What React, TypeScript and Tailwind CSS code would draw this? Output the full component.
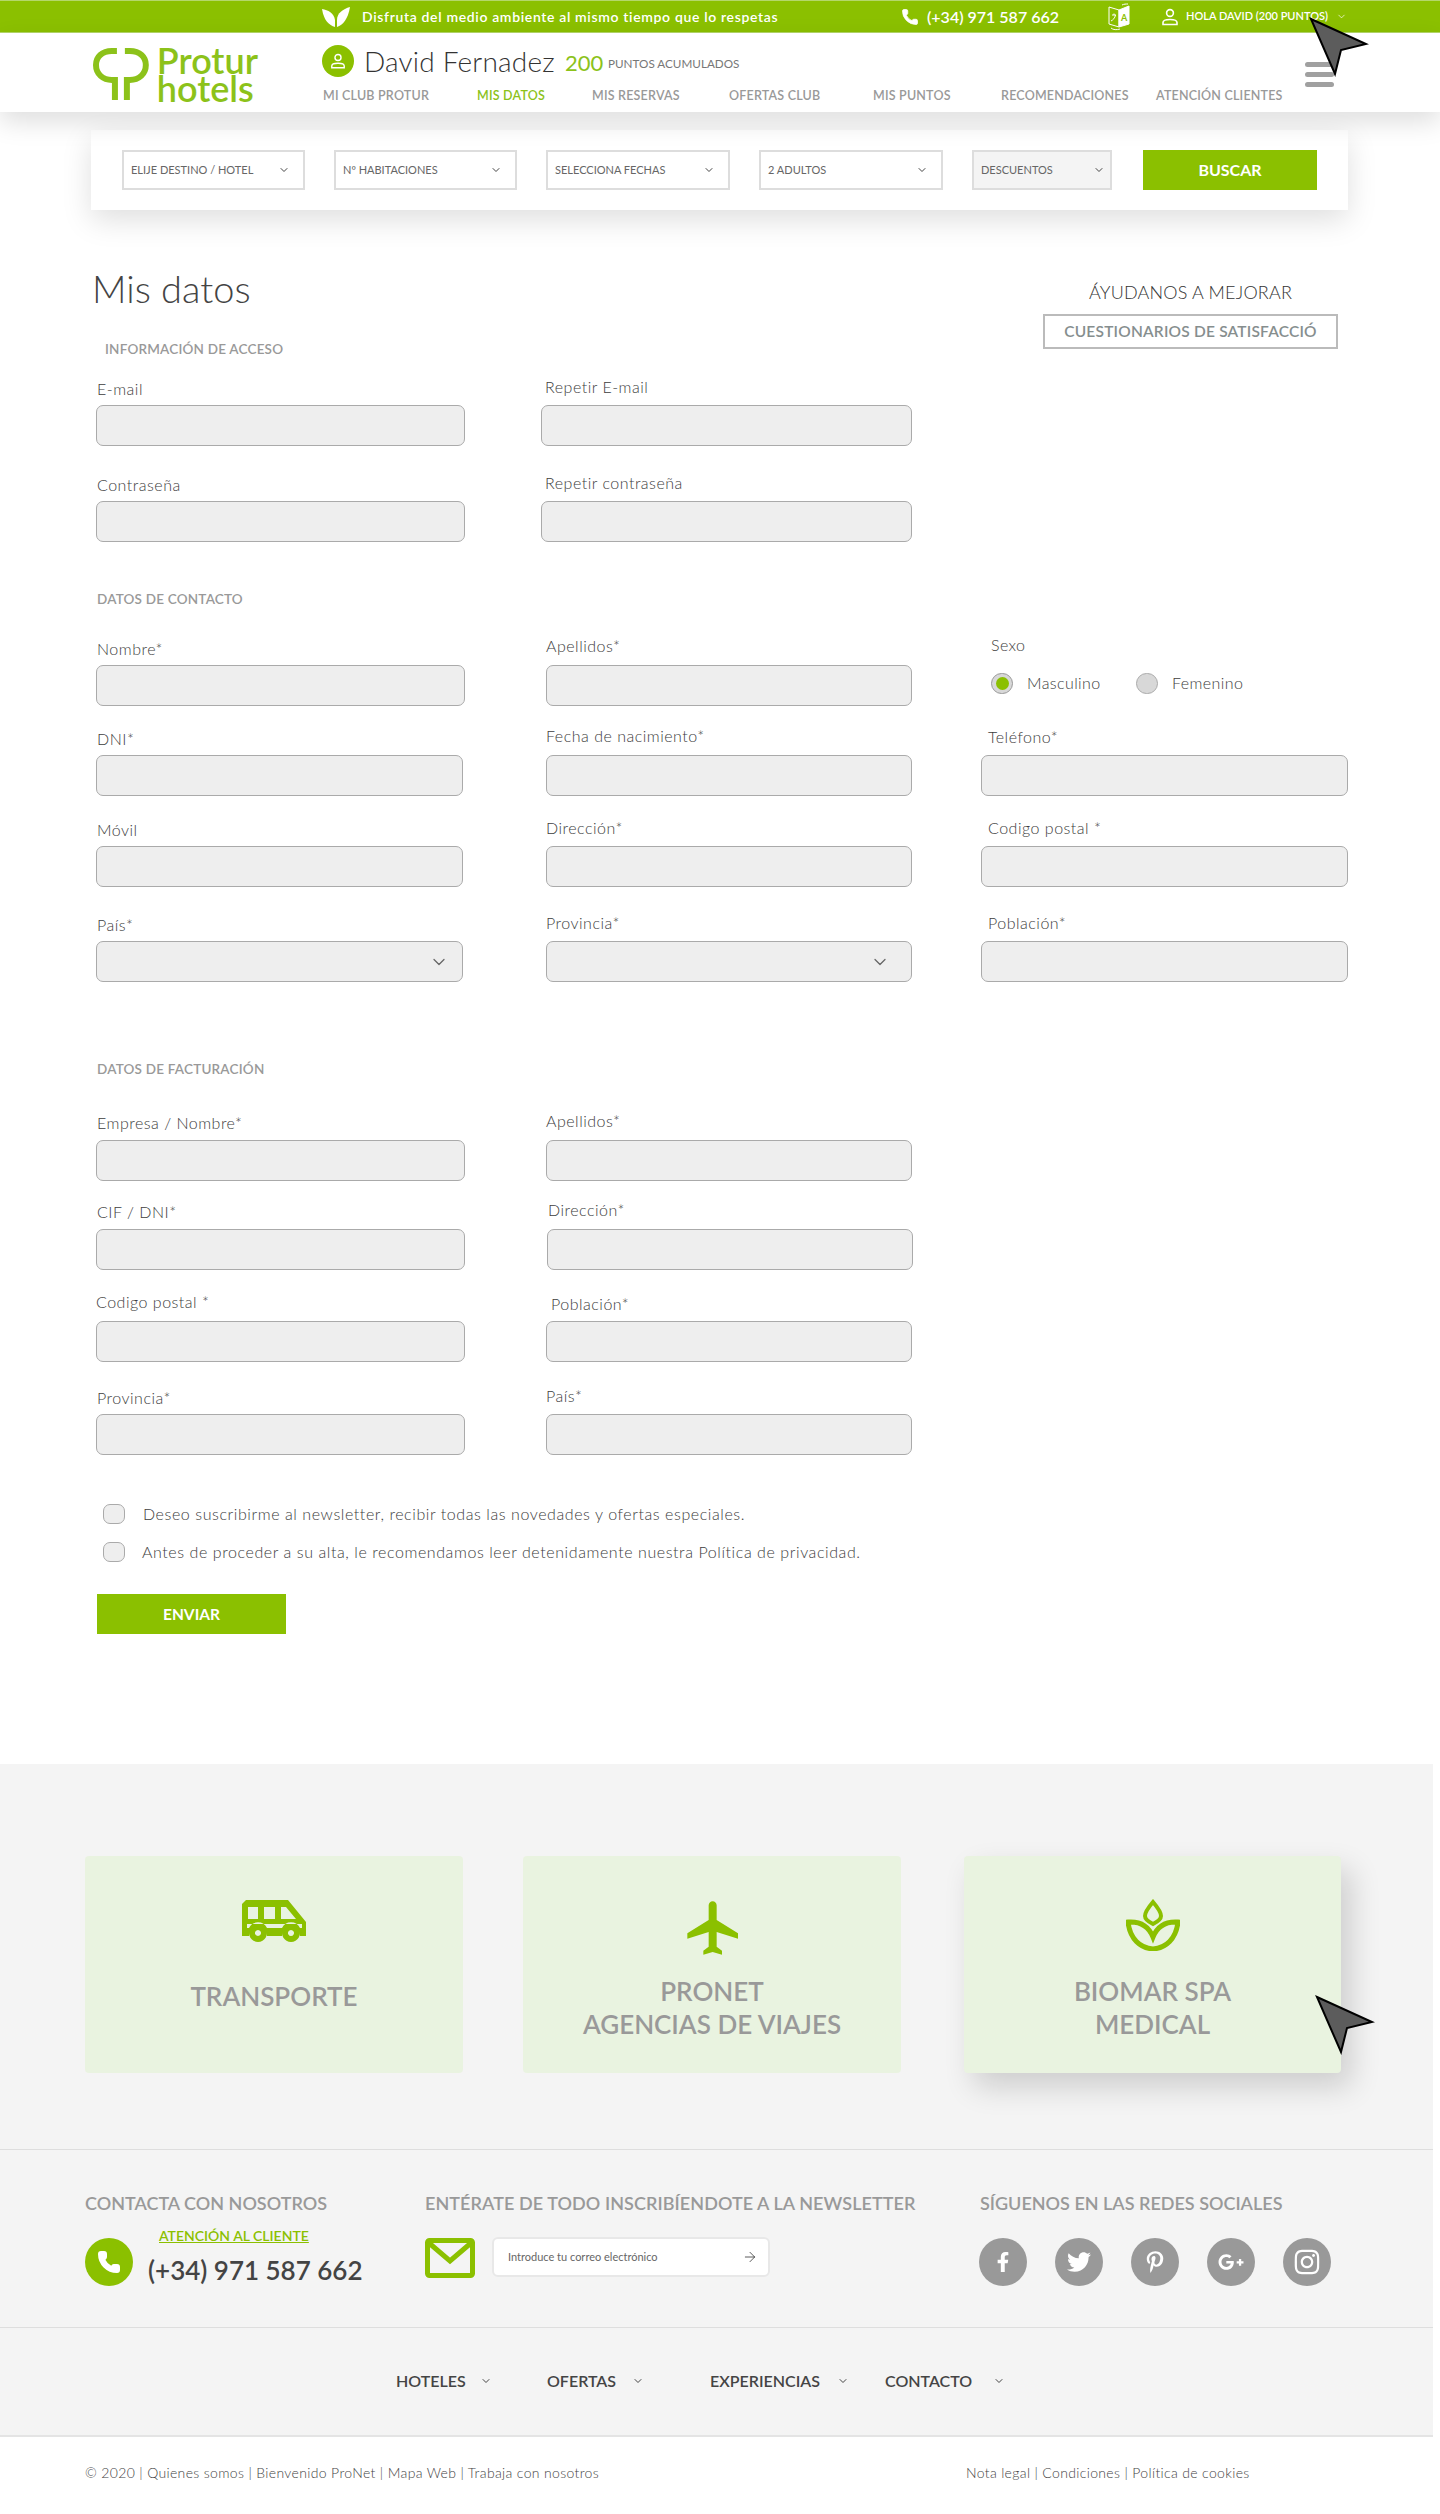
import React from "react";
import { ChevronDown, ArrowRight, Phone } from "lucide-react";
import { MdFlight } from "react-icons/md";
import { FaFacebookF, FaTwitter, FaPinterestP, FaGooglePlusG, FaInstagram } from "react-icons/fa";

const font = "font-['Lato','Open_Sans',sans-serif]";

function Cursor({ className }: { className: string }) {
  return (
    <svg className={className} width="60" height="60" viewBox="0 0 60 60">
      <path d="M2 2 L57 27 L32 33 L26 57 Z" fill="#5c5c5c" stroke="#000" strokeWidth="2" strokeLinejoin="miter" />
    </svg>
  );
}

function Logo() {
  return (
    <div className="flex items-center ml-[93px] w-[165px]">
      <svg width="56" height="52" viewBox="0 0 56 52" fill="none" stroke="#8cc21a" strokeWidth="6">
        <path d="M24 3 H19 C9 3 3 9 3 17 C3 26 10 32 19 32 H22 V52" />
        <path d="M32 3 H37 C47 3 53 9 53 17 C53 26 46 32 37 32 H34 V52" />
      </svg>
      <div className="ml-[8px] text-[#8cc21a] text-[36px] leading-[28px] font-semibold">
        <div>Protur</div>
        <div>hotels</div>
      </div>
    </div>
  );
}

function SearchField({ label, w, ml, soft }: { label: string; w: string; ml: string; soft?: boolean }) {
  return (
    <div
      className={`${w} ${ml} h-[40px] border-2 flex items-center justify-between pl-[7px] text-[11px] text-[#666] ${
        soft ? "bg-[#f4f4f4] border-[#ddd] pr-[5px]" : "bg-white border-[#ddd] pr-[13px]"
      }`}
    >
      <span className="pt-[1px]">{label}</span>
      <ChevronDown size={12} strokeWidth={2} className="text-[#444]" />
    </div>
  );
}

function Field({
  label,
  box,
  lab = "",
  select,
  inner = "pr-[14px]",
}: {
  label: string;
  box: string;
  lab?: string;
  select?: boolean;
  inner?: string;
}) {
  return (
    <div className={`${box} flex flex-col`}>
      <div className={`text-[16px] font-light tracking-[0.5px] leading-[20px] text-[#3d3d3d] ${lab}`}>{label}</div>
      <div className={`h-[41px] rounded-[7px] border border-[#aaa] bg-[#eeeeee] flex items-center justify-end ${inner}`}>
        {select && <ChevronDown size={20} strokeWidth={1.5} className="text-[#666]" />}
      </div>
    </div>
  );
}

function Card({
  lines,
  icon,
  shadow,
  width,
  top,
}: {
  lines: string[];
  icon: React.ReactNode;
  shadow?: boolean;
  width: string;
  top: string;
}) {
  return (
    <div
      className={`h-[217px] ${width} rounded-[4px] bg-[#e9f3e0] flex flex-col items-center ${
        shadow ? "shadow-[10px_14px_30px_rgba(0,0,0,0.16)]" : ""
      }`}
    >
      <div className={`h-[100px] ${top} flex items-center justify-center`}>{icon}</div>
      <div className={`text-[26px] leading-[33px] font-semibold text-[#999] text-center ${lines.length === 1 ? "mt-[9px]" : "mt-[0px]"}`}>
        {lines.map((l) => (
          <div key={l}>{l}</div>
        ))}
      </div>
    </div>
  );
}

export default function App() {
  return (
    <div className={`${font} relative w-[1440px] h-[2514px] bg-white overflow-hidden`}>
      {/* top bar */}
      <div className="h-[33px] bg-[#8bc000] border-y border-[#b4d76a] text-white flex items-center">
        <svg className="ml-[322px]" width="28" height="20" viewBox="0 0 28 20" fill="#fff">
          <path d="M13 20 C7 18 2 14 0 2 C6 3 12 6 13 13 Z" />
          <path d="M15 20 C21 18 26 12 28 0 C21 2 15 6 15 13 Z" />
        </svg>
        <span className="ml-[12px] text-[14px] font-semibold w-[415px] tracking-[0.65px] whitespace-nowrap">
          Disfruta del medio ambiente al mismo tiempo que lo respetas
        </span>
        <Phone size={18} fill="#fff" strokeWidth={1} className="ml-[124px]" />
        <span className="ml-[8px] text-[16px] font-semibold w-[133px] whitespace-nowrap">(+34) 971 587 662</span>
        <svg className="ml-[47px]" width="24" height="28" viewBox="0 0 24 28" fill="none" stroke="#fff" strokeWidth="1">
          <path d="M2 4 L12 7 V24 L2 21 Z" />
          <path d="M12 7 L22 3 V21 L12 24 Z" fill="#fff" />
          <path d="M5 12 H9 M7 10.5 V12 M8.5 12 C8 15 6 17 4 18" />
          <path d="M15 2 C17 1 19 1 21 1 M4 25 C6 27 10 27 13 26" />
          <text x="14" y="18" fontSize="9" fontWeight="700" fill="#8bc000" stroke="none">A</text>
        </svg>
        <svg className="ml-[30px]" width="18" height="18" viewBox="0 0 18 18" fill="none" stroke="#fff" strokeWidth="1.6">
          <circle cx="9" cy="5" r="3.4" />
          <path d="M2 16.5 V14.5 C2 12.5 4 11.5 9 11.5 C14 11.5 16 12.5 16 14.5 V16.5 Z" />
        </svg>
        <span className="ml-[7px] text-[11px] font-semibold w-[150px] whitespace-nowrap">HOLA DAVID (200 PUNTOS)</span>
        <ChevronDown size={11} strokeWidth={1.5} />
      </div>

      {/* header */}
      <header className="relative z-10 h-[79px] bg-white shadow-[0_10px_24px_rgba(0,0,0,0.13)] flex">
        <div className="pt-[13px]">
          <Logo />
        </div>
        <div className="ml-[64px] flex-1 flex flex-col">
          <div className="flex items-center mt-[12px] h-[31px]">
            <div className="w-[32px] h-[32px] rounded-full bg-[#8bc000] flex items-center justify-center">
              <svg width="16" height="16" viewBox="0 0 18 18" fill="none" stroke="#fff" strokeWidth="1.6">
                <circle cx="9" cy="5" r="3.4" />
                <path d="M2 16.5 V14.5 C2 12.5 4 11.5 9 11.5 C14 11.5 16 12.5 16 14.5 V16.5 Z" />
              </svg>
            </div>
            <span className="ml-[10px] text-[28px] font-light tracking-[0.2px] text-[#333] w-[201px] whitespace-nowrap">David Fernadez</span>
            <span className="mt-[3px] text-[22px] text-[#8cc21a] w-[43px]">200</span>
            <span className="mt-[6px] text-[11.7px] text-[#777] whitespace-nowrap">PUNTOS ACUMULADOS</span>
          </div>
          <nav className="mt-[11px] flex text-[12.5px] font-semibold text-[#999] tracking-[0.2px] leading-[18px] whitespace-nowrap">
            <span className="ml-[1px] w-[154px]">MI CLUB PROTUR</span>
            <span className="w-[115px] text-[#8cc21a]">MIS DATOS</span>
            <span className="w-[137px]">MIS RESERVAS</span>
            <span className="w-[144px]">OFERTAS CLUB</span>
            <span className="w-[128px]">MIS PUNTOS</span>
            <span className="w-[155px]">RECOMENDACIONES</span>
            <span>ATENCIÓN CLIENTES</span>
          </nav>
        </div>
        <div className="mr-[106px] mt-[29px] flex flex-col gap-[5px] w-[29px]">
          <div className="h-[5px] rounded-full bg-[#a0a0a0]" />
          <div className="h-[5px] rounded-full bg-[#a0a0a0]" />
          <div className="h-[5px] rounded-full bg-[#a0a0a0]" />
        </div>
      </header>

      {/* search */}
      <div className="ml-[91px] mt-[18px] w-[1257px] h-[80px] bg-white shadow-[0_10px_30px_rgba(0,0,0,0.13)] flex items-center">
        <SearchField label="ELIJE DESTINO / HOTEL" w="w-[183px]" ml="ml-[31px]" />
        <SearchField label="Nº HABITACIONES" w="w-[183px]" ml="ml-[29px]" />
        <SearchField label="SELECCIONA FECHAS" w="w-[184px]" ml="ml-[29px]" />
        <SearchField label="2 ADULTOS" w="w-[184px]" ml="ml-[29px]" />
        <SearchField label="DESCUENTOS" w="w-[140px]" ml="ml-[29px]" soft />
        <div className="ml-[31px] w-[174px] h-[40px] bg-[#8bc000] text-white text-[16px] font-bold flex items-center justify-center">BUSCAR</div>
      </div>

      {/* access + help */}
      <div className="flex">
        <div>
          <h1 className="mt-[56px] ml-[92px] text-[38px] leading-[44px] text-[#444] font-light">Mis datos</h1>
          <div className="mt-[29px] ml-[105px] text-[13.5px] tracking-[0.2px] leading-[20px] font-semibold text-[#999]">INFORMACIÓN DE ACCESO</div>
          <div className="h-[87px] flex items-end">
            <Field label="E-mail" box="ml-[96px] w-[369px]" lab="pl-[1px] pb-[6px]" />
            <Field label="Repetir E-mail" box="ml-[76px] w-[371px]" lab="pl-[4px] pb-[8px]" />
          </div>
          <div className="h-[96px] flex items-end">
            <Field label="Contraseña" box="ml-[96px] w-[369px]" lab="pl-[1px] pb-[6px]" />
            <Field label="Repetir contraseña" box="ml-[76px] w-[371px]" lab="pl-[4px] pb-[8px]" />
          </div>
        </div>
        <div className="ml-[131px] w-[295px] flex flex-col items-center">
          <div className="mt-[70px] text-[18px] font-light tracking-[0.2px] leading-[24px] text-[#333]">ÁYUDANOS A MEJORAR</div>
          <div className="mt-[10px] w-[295px] h-[35px] border-2 border-[#bbb] text-[15.5px] font-semibold tracking-[0.2px] text-[#868e8e] flex items-center justify-center">
            CUESTIONARIOS DE SATISFACCIÓ
          </div>
        </div>
      </div>

      {/* contact */}
      <div className="mt-[47px] ml-[97px] text-[13.5px] tracking-[0.2px] leading-[20px] font-semibold text-[#999]">DATOS DE CONTACTO</div>
      <div className="h-[97px] flex items-end">
        <Field label="Nombre*" box="ml-[96px] w-[369px]" lab="pl-[1px] pb-[6px]" />
        <Field label="Apellidos*" box="ml-[81px] w-[366px]" lab="pb-[9px]" />
        <div className="ml-[79px] flex flex-col text-[16px] font-light tracking-[0.4px] text-[#3d3d3d]">
          <div className="leading-[20px]">Sexo</div>
          <div className="mt-[16px] mb-[11px] flex items-center">
            <div className="w-[22px] h-[21px] rounded-full border border-[#999] bg-[#d8d8d8] flex items-center justify-center">
              <div className="w-[13px] h-[13px] rounded-full bg-[#8bc000]" />
            </div>
            <span className="ml-[14px] w-[109px]">Masculino</span>
            <div className="w-[22px] h-[21px] rounded-full border border-[#aaa] bg-[#d8d8d8]" />
            <span className="ml-[14px]">Femenino</span>
          </div>
        </div>
      </div>
      <div className="h-[90px] flex items-end">
        <Field label="DNI*" box="ml-[96px] w-[367px]" lab="pl-[1px] pb-[6px]" />
        <Field label="Fecha de nacimiento*" box="ml-[83px] w-[366px]" lab="pb-[9px]" />
        <Field label="Teléfono*" box="ml-[69px] w-[367px]" lab="pl-[7px] pb-[8px]" />
      </div>
      <div className="h-[91px] flex items-end">
        <Field label="Móvil" box="ml-[96px] w-[367px]" lab="pl-[1px] pb-[6px]" />
        <Field label="Dirección*" box="ml-[83px] w-[366px]" lab="pb-[8px]" />
        <Field label="Codigo postal *" box="ml-[69px] w-[367px]" lab="pl-[7px] pb-[8px]" />
      </div>
      <div className="h-[95px] flex items-end">
        <Field label="País*" box="ml-[96px] w-[367px]" lab="pl-[1px] pb-[6px]" select inner="pr-[13px]" />
        <Field label="Provincia*" box="ml-[83px] w-[366px]" lab="pb-[8px]" select inner="pr-[21px]" />
        <Field label="Población*" box="ml-[69px] w-[367px]" lab="pl-[7px] pb-[8px]" />
      </div>

      {/* billing */}
      <div className="mt-[77px] ml-[97px] text-[13.5px] tracking-[0.2px] leading-[20px] font-semibold text-[#999]">DATOS DE FACTURACIÓN</div>
      <div className="h-[102px] flex items-end">
        <Field label="Empresa / Nombre*" box="ml-[96px] w-[369px]" lab="pl-[1px] pb-[7px]" />
        <Field label="Apellidos*" box="ml-[81px] w-[366px]" lab="pb-[9px]" />
      </div>
      <div className="h-[89px] flex items-end">
        <Field label="CIF / DNI*" box="ml-[96px] w-[369px]" lab="pl-[1px] pb-[7px]" />
        <Field label="Dirección*" box="ml-[82px] w-[366px]" lab="pl-[1px] pb-[9px]" />
      </div>
      <div className="h-[92px] flex items-end">
        <Field label="Codigo postal *" box="ml-[96px] w-[369px]" lab="pb-[9px]" />
        <Field label="Población*" box="ml-[81px] w-[366px]" lab="pl-[5px] pb-[7px]" />
      </div>
      <div className="h-[93px] flex items-end">
        <Field label="Provincia*" box="ml-[96px] w-[369px]" lab="pl-[1px] pb-[6px]" />
        <Field label="País*" box="ml-[81px] w-[366px]" lab="pb-[8px]" />
      </div>

      {/* checks */}
      <div className="mt-[49px] ml-[103px] h-[20px] flex items-center text-[16px] font-light tracking-[0.58px] text-[#3d3d3d] whitespace-nowrap">
        <div className="w-[22px] h-[20px] rounded-[7px] border border-[#aaa] bg-[#eeeeee]" />
        <span className="ml-[18px]">Deseo suscribirme al newsletter, recibir todas las novedades y ofertas especiales.</span>
      </div>
      <div className="mt-[18px] ml-[103px] h-[20px] flex items-center text-[16px] font-light tracking-[0.58px] text-[#3d3d3d] whitespace-nowrap">
        <div className="w-[22px] h-[20px] rounded-[7px] border border-[#aaa] bg-[#eeeeee]" />
        <span className="ml-[17px]">Antes de proceder a su alta, le recomendamos leer detenidamente nuestra Política de privacidad.</span>
      </div>
      <div className="mt-[32px] ml-[97px] w-[189px] h-[40px] bg-[#8bc000] text-white text-[15.5px] font-bold flex items-center justify-center pt-[1px]">ENVIAR</div>

      {/* gray footer */}
      <div className="mt-[130px] w-[1433px] h-[673px] bg-[#f4f4f4] flex flex-col">
        <div className="h-[386px] border-b border-[#dedede] flex items-start pt-[92px]">
          <div className="ml-[85px]">
            <Card
              width="w-[378px]"
              top="mt-[15px]"
              lines={["TRANSPORTE"]}
              icon={
                <svg width="64" height="42" viewBox="0 0 64 42" fill="#8bc000">
                  <path fillRule="evenodd" d="M4 0 H46 L64 22 V36 H58 A9 9 0 0 0 40 36 H25 A9 9 0 0 0 7 36 H0 V4 Z M6 7 V19 H16 V7 Z M22 7 V19 H33 V7 Z M39 7 V19 H54 L44 7 Z M5 24 V28 H7 A10 10 0 0 1 25 28 H40 A10 10 0 0 1 58 28 H60 V24 Z" />
                  <path fillRule="evenodd" d="M16 24 A9 9 0 1 0 16.01 24 Z M16 30 A3 3 0 1 1 15.99 30 Z M49 24 A9 9 0 1 0 49.01 24 Z M49 30 A3 3 0 1 1 48.99 30 Z" />
                </svg>
              }
            />
          </div>
          <div className="ml-[60px]">
            <Card
              width="w-[378px]"
              top="mt-[19px]"
              lines={["PRONET", "AGENCIAS DE VIAJES"]}
              icon={<MdFlight size={64} color="#8bc000" className="translate-x-[2px] translate-y-[3px]" />}
            />
          </div>
          <div className="ml-[63px]">
            <Card
              shadow
              width="w-[377px]"
              top="mt-[19px]"
              lines={["BIOMAR SPA", "MEDICAL"]}
              icon={
                <svg width="54" height="52" viewBox="0 0 54 52" fill="none" stroke="#8bc000" strokeWidth="5">
                  <path d="M27 3 C21 10 19 14 19 17 C19 20 23 23 27 25 C31 23 35 20 35 17 C35 14 33 10 27 3 Z" strokeWidth="4" />
                  <path d="M2 23 C16 22 23 28 27 38 C31 28 38 22 52 23 C50 40 40 49 27 50 C14 49 4 40 2 23 Z" />
                </svg>
              }
            />
          </div>
        </div>
        <div className="h-[178px] border-b border-[#dedede] flex">
          <div className="ml-[85px] w-[340px]">
            <div className="mt-[42px] text-[18px] leading-[22px] font-semibold text-[#999]">CONTACTA CON NOSOTROS</div>
            <div className="flex mt-[12px]">
              <div className="mt-[12px] w-[48px] h-[48px] rounded-full bg-[#8bc000] flex items-center justify-center">
                <Phone size={24} fill="#fff" stroke="#fff" />
              </div>
              <div className="ml-[15px]">
                <div className="ml-[11px] text-[14px] leading-[20px] font-semibold text-[#8bc000] underline whitespace-nowrap">ATENCIÓN AL CLIENTE</div>
                <div className="mt-[8px] text-[26px] leading-[32px] font-semibold text-[#444] whitespace-nowrap">(+34) 971 587 662</div>
              </div>
            </div>
          </div>
          <div className="w-[555px]">
            <div className="mt-[42px] text-[18px] leading-[22px] font-semibold tracking-[0.07px] text-[#999] whitespace-nowrap">ENTÉRATE DE TODO INSCRIBÍENDOTE A LA NEWSLETTER</div>
            <div className="flex mt-[23px]">
              <svg className="mt-[1px]" width="50" height="40" viewBox="0 0 50 40" fill="none" stroke="#8bc000" strokeWidth="5">
                <rect x="2.5" y="2.5" width="45" height="35" rx="2" />
                <path d="M4 5 L25 23 L46 5" />
              </svg>
              <div className="ml-[17px] w-[278px] h-[40px] bg-white border-2 border-[#e8e8e8] rounded-[6px] flex items-center justify-between pl-[14px] pr-[10px] text-[11px] text-[#666]">
                <span>Introduce tu correo electrónico</span>
                <ArrowRight size={16} strokeWidth={1.2} className="text-[#333]" />
              </div>
            </div>
          </div>
          <div>
            <div className="mt-[42px] text-[18px] leading-[22px] font-semibold text-[#999] whitespace-nowrap">SÍGUENOS EN LAS REDES SOCIALES</div>
            <div className="flex mt-[24px] gap-[28px] -ml-[1px] text-white">
              {[
                <FaFacebookF key="f" size={20} />,
                <FaTwitter key="t" size={24} />,
                <FaPinterestP key="p" size={22} />,
                <FaGooglePlusG key="g" size={26} />,
                <FaInstagram key="i" size={28} />,
              ].map((ic, i) => (
                <div key={i} className="w-[48px] h-[48px] rounded-full bg-[#999] flex items-center justify-center">
                  {ic}
                </div>
              ))}
            </div>
          </div>
        </div>
        <div className="flex-1 border-b-2 border-[#e4e4e4] flex items-center text-[16px] font-semibold text-[#444] pb-[2px]">
          <span className="ml-[396px] w-[84px]">HOTELES</span>
          <ChevronDown size={12} strokeWidth={2} />
          <span className="ml-[55px] w-[85px]">OFERTAS</span>
          <ChevronDown size={12} strokeWidth={2} />
          <span className="ml-[66px] w-[127px]">EXPERIENCIAS</span>
          <ChevronDown size={12} strokeWidth={2} />
          <span className="ml-[36px] w-[108px]">CONTACTO</span>
          <ChevronDown size={12} strokeWidth={2} />
        </div>
      </div>

      {/* legal */}
      <div className="flex mt-[26px] text-[14px] font-light tracking-[0.35px] leading-[20px] text-[#444]">
        <span className="ml-[85px] w-[881px]">© 2020 | Quienes somos | Bienvenido ProNet | Mapa Web | Trabaja con nosotros</span>
        <span>Nota legal | Condiciones | Política de cookies</span>
      </div>

      <Cursor className="absolute left-[1309px] top-[17px] z-20" />
      <Cursor className="absolute left-[1315px] top-[1995px] z-20" />
    </div>
  );
}
